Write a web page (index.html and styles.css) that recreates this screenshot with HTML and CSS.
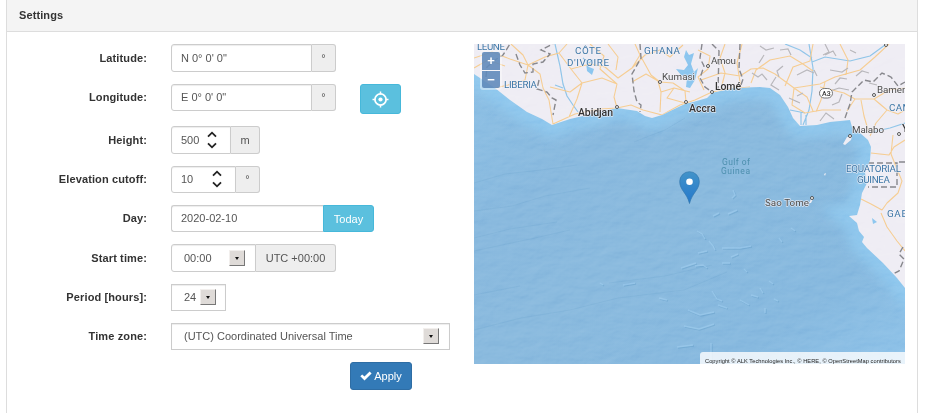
FILE: index.html
```html
<!DOCTYPE html>
<html lang="en">
<head>
<meta charset="utf-8">
<title>Settings</title>
<link rel="stylesheet" href="styles.css">
</head>
<body>
<section class="panel">
  <header class="panel-heading">Settings</header>
  <div class="panel-body">
    <form class="settings">
      <div class="row">
        <label>Latitude:</label>
        <div class="group wide"><span class="field">N 0° 0' 0"</span><span class="addon deg">°</span></div>
      </div>
      <div class="row">
        <label class="raised">Longitude:</label>
        <div class="group wide short"><span class="field">E 0° 0' 0"</span><span class="addon deg">°</span></div>
        <span class="btn btn-info locate">
          <svg width="17" height="17" viewBox="0 0 17 17"><circle cx="8.5" cy="8.5" r="5.6" fill="none" stroke="#fff" stroke-width="1.7"/><circle cx="8.5" cy="8.5" r="2.1" fill="#fff"/><path d="M8.5 .5V3.5M8.5 13.5V16.5M.5 8.5H3.5M13.5 8.5H16.5" stroke="#fff" stroke-width="1.5"/></svg>
        </span>
      </div>
      <div class="row">
        <label>Height:</label>
        <div class="group narrow"><span class="field">500<svg class="spin" width="10" height="18" viewBox="0 0 10 18"><path d="M1 5.7 5 1.7 9 5.7M1 12.3 5 16.3 9 12.3"/></svg></span><span class="addon meter">m</span></div>
      </div>
      <div class="row">
        <label class="raised">Elevation cutoff:</label>
        <div class="group narrow short"><span class="field">10<svg class="spin" width="10" height="18" viewBox="0 0 10 18"><path d="M1 5.7 5 1.7 9 5.7M1 12.3 5 16.3 9 12.3"/></svg></span><span class="addon deg">°</span></div>
      </div>
      <div class="row">
        <label class="raised">Day:</label>
        <div class="group day short"><span class="field">2020-02-10</span><span class="btn btn-info today">Today</span></div>
      </div>
      <div class="row">
        <label>Start time:</label>
        <div class="group wide"><span class="field select">00:00<i class="arrow"></i></span><span class="addon utc">UTC +00:00</span></div>
      </div>
      <div class="row">
        <label class="raised">Period [hours]:</label>
        <div class="group period short"><span class="field select square">24<i class="arrow"></i></span></div>
      </div>
      <div class="row">
        <label class="raised">Time zone:</label>
        <div class="group zone short"><span class="field select square">(UTC) Coordinated Universal Time<i class="arrow"></i></span></div>
      </div>
      <div class="actions">
        <span class="btn btn-primary"><svg width="12" height="10" viewBox="0 0 12 10"><path d="M.3 5.3 2.2 3.4 4.5 5.6 9.6.4 11.6 2.4 4.5 9.6Z" fill="#fff"/></svg>Apply</span>
      </div>
    </form>
    <div class="map">
      <svg class="tiles" width="431" height="320" viewBox="474 44 431 320">
        <defs>
          <linearGradient id="sea" x1="0" y1="0" x2="1" y2="1">
            <stop offset="0" stop-color="#8dc1e6"/><stop offset=".3" stop-color="#89b9de"/><stop offset=".5" stop-color="#8abade"/><stop offset=".8" stop-color="#87b9df"/><stop offset="1" stop-color="#8fc3e9"/>
          </linearGradient>
          <linearGradient id="pin" x1="0" y1="0" x2="0" y2="1"><stop offset="0" stop-color="#4293c9"/><stop offset="1" stop-color="#2478cc"/></linearGradient>
          <path id="land" d="M474 44V74L480 78 495 88 510 100 527 112 542 119 552 125 570 119 583 116 617 108 637 111 645 116 652 118 662 115 668 112 685 104 693 102 707 98 712 93 733 88 760 87 770 88 780 95 788 107 793 118 800 126 817 125 830 122 850 120 852 127 860 133 868 140 871 147 870 160 865 173 867 183 862 193 860 205 857 215 849 216 857 223 859 231 864 237 862 242 867 248 883 263 897 278 905 288V44Z"/>
          <clipPath id="shore"><use href="#land"/></clipPath>
          <filter id="soft" x="-20%" y="-20%" width="140%" height="140%"><feGaussianBlur stdDeviation="6"/></filter>
          <filter id="relief" x="0" y="0" width="100%" height="100%" color-interpolation-filters="sRGB">
            <feTurbulence type="fractalNoise" baseFrequency=".05 .09" numOctaves="4" seed="8"/>
            <feDiffuseLighting surfaceScale="1" lighting-color="#fff"><feDistantLight azimuth="235" elevation="32"/></feDiffuseLighting>
          </filter>
        </defs>
        <rect x="474" y="44" width="431" height="320" fill="url(#sea)"/>
        <use href="#land" fill="none" stroke="#91cbf1" stroke-width="24" filter="url(#soft)" opacity=".8"/>
        <g class="ridges">
          <path d="M474 183 505 174 541 170 577 165M474 211 512 206 545 196 590 188M474 238 510 229 557 222M474 251 535 238 570 230M474 330 521 318 570 310 618 298 684 290 727 272M474 295 520 286M609 283 665 276 712 265M634 142 649 136 665 130 685 118"/>
        </g>
        <g class="mounts">
          <path d="M697 231l5 3 3 5M713 216l6-3M728 214l9-4M698 253l9-2M709 241l4 5 2 4M722 248h18M733 190l2 5-3 3M779 238l3 4M791 228l4 3M744 269l3 3M769 281l4 3M712 291l5 8 5 2M751 295l7 2M760 288l3 5M774 299l4 2M681 268l15-5M684 326l15 3 15-5M688 310l12 5 14-3M677 347l16-2M711 343v20M740 248l11-2M695 266l8-1 4 3M722 263h8M731 257l7-3M600 283l3 2M623 285l12-2M740 300l9 5M765 308v5M659 298l8 2M718 305l9 3"/>
        </g>
        <use href="#land" fill="#efedf4"/>
        <g clip-path="url(#shore)">
          <g class="water">
            <path d="M555 44 560 66 563 84 567 96 573 105 578 112M555 85l8 3M583 58l6 5 4-3M809 44 813 68 812 91 809 110 803 125M812 62 825 57 850 61 870 56 885 45M790 110l15 3M872 132 890 128 905 123M785 44l15 6 12 8M801 112v13M806 115v10"/>
            <path class="lake" d="M586 61l3 6 5 2-2 6-5-4ZM686 50l3 5 5-2-3 11 3 8 4-4-3 12-5 8-4-1 1-9-6-3-5-6 8 1 4-5-4-8ZM872 218l5 4-4 2Z"/>
          </g>
          <g class="roads">
            <path d="M474 58 492 52 510 59 528 65 525 80 508 85 495 88M511 44 523 55 528 65 540 74 543 88 549 100 553 124 575 114 600 109 617 108M528 65 545 57 559 53 567 44M559 53 571 69 582 83 577 99 569 117M582 83 602 78 617 84 614 97 617 108M571 69 590 64 605 67 618 78M590 44 604 56 600 69 617 84M582 83 570 92 550 87M608 44l10 13-2 13M618 78 632 68 640 55 635 44M617 108l14-3 12 5 19 5 18-10 15-5 17-8 15-3 23-2M632 82 646 74 658 81 661 92 660 112M632 68 645 55 660 50 670 57 683 45M660 82 673 83 685 91 686 102M640 55l11 20 9 7M661 92 674 88 690 92M674 88 667 98 685 103M698 50 710 56 708 69 698 77 704 90M725 44l-5 14 5 15-4 16M742 44l-5 19 4 25M701 80 721 73 740 76 751 69 763 68 775 74 794 88 820 84 835 77 860 70 875 57 889 44M751 83 756 70 770 60 790 56 803 64 813 71M794 88 792 105 805 113 822 110 841 110M794 88 807 97 813 111M825 82 821 100 816 112M820 87 844 93 855 99 847 111M813 44l-3 17-17 6-8 19M840 44l8 16-2 15M474 68 488 60 505 66M855 99 874 99 887 110 898 114 905 110M874 99 889 90 905 88M861 100l3 16 5 17M887 110l-11 13-6 13M893 135l-2 19M871 153l18 2 5-8 11-7M891 154l6 15 5 12-4 12-11 10-5 7-11-6-10-5M881 213l6 14 10 14 8 10"/>
          </g>
          <g class="gray">
            <path d="M752 73l6 4 4-3 5 6M780 50l8-1 3 6M776 77l-5 8 8 5M797 75l10-5 7 3M825 55l8-4 3 5M827 92l12-4 10 2M830 70l12 2 6-4M800 103l-11-5M820 121l6-8 8 6M842 94l-3 8-7 3M856 76l6-5 7 2M764 55l-5 8M825 44l4 8-6 3M869 83l8 2M760 46l6 4 8-2M783 66l-6 5 2 6M817 76l-3-6M835 84l5-6 7 1M850 50l6 3M797 96l6-3"/>
          </g>
          <g class="borders">
            <path d="M486 77 487 67 495 60 503 55 510 44M516 54 520 65 525 73 533 72 533 64 543 62 550 54 541 50 553 44M539 80l-2 9 10 3 5 6 4 2-3 15M640 44l1 14-9 16 2 17 3 11 4 3-1 7M702 44l-2 14 4 8-4 12 5 9 7 5M712 44l7 7-1 39M740 44l-1 25 4 10-3 9M845 118l5-14 2-12 12-12 9 2 9-9 9 4 7 9 7-4M868 163h29v24h-29M899 162h6M903 247l-4 7 5 5-5 12-6 3"/>
          </g>
        </g>
        <rect class="texture" x="474" y="44" width="431" height="320" filter="url(#relief)"/>
        <path d="M847 137l5-1-1 4-6 5-2-1ZM809 203l3-6 1 2-2 4ZM824 174l2-1-1 3Z" fill="#efedf4"/>
        <g class="towns"><circle cx="617" cy="107" r="1.5"/><circle cx="660" cy="82" r="1.5"/><circle cx="686" cy="102" r="1.5"/><circle cx="708" cy="66" r="1.5"/><circle cx="712" cy="92" r="1.5"/><circle cx="874" cy="95" r="1.5"/><circle cx="899" cy="134" r="1.5"/><circle cx="850" cy="136" r="1.5"/><circle cx="812" cy="198" r="1.5"/><circle cx="886" cy="45" r="1.5"/></g>
        <g class="country">
          <text x="477" y="50" textLength="28">LEUNE</text>
          <text x="504" y="88" textLength="33">LIBERIA</text>
          <text x="575" y="54" textLength="26">CÔTE</text><text x="567" y="66" textLength="42">D'IVOIRE</text>
          <text x="644" y="54" textLength="36">GHANA</text>
          <text x="889" y="111" textLength="28">CAME</text>
          <text x="846" y="172" textLength="55">EQUATORIAL</text><text x="857" y="183" textLength="33">GUINEA</text>
          <text x="887" y="217" textLength="28">GABO</text>
        </g>
        <g class="city">
          <text class="big" x="578" y="116" textLength="35">Abidjan</text>
          <text x="662" y="80" textLength="33">Kumasi</text>
          <text class="big" x="689" y="112" textLength="27">Accra</text>
          <text class="big" x="715" y="90" textLength="26">Lomé</text>
          <text x="711" y="64" textLength="25">Amou</text>
          <text x="877" y="93" textLength="41">Bamenda</text>
          <text x="852" y="133" textLength="32">Malabo</text>
          <text class="big" x="902" y="132">Yaoundé</text>
          <text x="765" y="206" textLength="44">Sao Tome</text>
        </g>
        <g class="gulf"><text x="722" y="165" textLength="28">Gulf of</text><text x="721" y="174" textLength="29">Guinea</text></g>
        <rect x="819.5" y="88.500" width="13" height="9.500" rx="4.700" fill="#fff" stroke="#777"/><text class="shield" x="822" y="96">A3</text>
        <path d="M689.500 203.500C687 193 679.700 190 679.700 181.500A9.800 9.800 0 0 1 699.300 181.500C699.300 190 692 193 689.500 203.500Z" fill="url(#pin)" stroke="#3277ad" stroke-width=".7"/>
        <circle cx="689.500" cy="181.700" r="3.300" fill="#fff"/>
      </svg>
      <div class="zoom"><span>+</span><span>−</span></div>
      <div class="credits">Copyright © ALK Technologies Inc., © HERE, © OpenStreetMap contributors</div>
    </div>
  </div>
</section>
</body>
</html>
```
FILE: styles.css
```css
* { box-sizing: border-box; }
body {
  margin: 0;
  height: 413px;
  overflow: hidden;
  background: #fff;
  color: #333;
  font: 11px/16px "Liberation Sans", Arial, sans-serif;
}
.panel {
  width: 912px;
  height: 430px;
  margin-left: 6px;
  border: 1px solid #ddd;
  border-top: 0;
}
.panel-heading {
  height: 32px;
  padding: 7px 12px;
  background: #f4f4f4;
  border-bottom: 1px solid #ddd;
  font-weight: bold;
  letter-spacing: .1px;
}
.panel-body {
  display: flex;
  gap: 24px;
  padding: 12px 12px 0;
}
.settings {
  display: grid;
  grid-template-rows: 40px 42px 40px 39px 39px 40px 39px 39px 28px;
  width: 431px;
}
.row {
  display: flex;
  align-items: flex-start;
}
label {
  flex: none;
  width: 128px;
  margin-right: 24px;
  padding-top: 6px;
  text-align: right;
  font-weight: bold;
  letter-spacing: .12px;
}
label.raised { padding-top: 5px; }
.group {
  display: flex;
  height: 28px;
}
.group.short { height: 27px; }
.wide { width: 165px; }
.narrow { width: 89px; }
.day { width: 203px; }
.period { width: 55px; }
.zone { width: 279px; }
.field {
  display: flex;
  flex: 1;
  align-items: center;
  justify-content: space-between;
  padding: 0 13px 0 9px;
  border: 1px solid #ccc;
  border-radius: 3px 0 0 3px;
  box-shadow: inset 0 1px 1px rgba(0, 0, 0, .075);
  color: #555;
  white-space: nowrap;
}
.short .field, .short .addon { padding-bottom: 1px; }
.field.square { border-radius: 0; }
.select { padding: 0 10px 0 12px; }
.period .select { padding-right: 9px; }
.addon {
  flex: none;
  display: flex;
  align-items: center;
  justify-content: center;
  width: 24px;
  border: 1px solid #ccc;
  border-left: 0;
  border-radius: 0 3px 3px 0;
  background: #eee;
  color: #555;
}
.meter { width: 29px; }
.utc { width: 80px; }
.spin {
  fill: none;
  stroke: #222;
  stroke-width: 1.8;
}
.arrow {
  display: flex;
  align-items: center;
  justify-content: center;
  width: 16px;
  height: 16px;
  border: 1px solid;
  border-color: #f2efed #777 #777 #f2efed;
  background: #dfdbd8;
}
.arrow::after {
  content: "";
  border: 2.5px solid transparent;
  border-top: 3px solid #111;
  border-bottom: 0;
}
.btn {
  display: flex;
  align-items: center;
  justify-content: center;
  border: 1px solid #46b8da;
  border-radius: 3px;
  color: #fff;
}
.btn-info { background: #5bc0de; }
.locate {
  width: 41px;
  height: 30px;
  margin-left: 24px;
}
.today {
  width: 51px;
  border-radius: 0 3px 3px 0;
}
.day .field { border-right: 0; }
.actions { padding-left: 331px; }
.btn-primary {
  width: 62px;
  height: 28px;
  gap: 2px;
  border-color: #2e6da4;
  background: #337ab7;
}
.map {
  position: relative;
  width: 431px;
  height: 320px;
  overflow: hidden;
}
.tiles { display: block; font-family: Roboto, sans-serif; }
.texture { mix-blend-mode: soft-light; opacity: .28; }
.ridges path { fill: none; stroke: #74a9d2; stroke-width: 1; opacity: .35; }
.mounts path { fill: none; stroke: #9fcdef; stroke-width: 1.4; opacity: .6; filter: drop-shadow(1px 1px 0 #6ca4cd); }
.water path { fill: none; stroke: #8fc5e9; stroke-width: 1.2; }
.water .lake { fill: #8cc6ef; stroke: none; }
.roads path { fill: none; stroke: #f6cd92; stroke-width: 1.1; stroke-linejoin: round; }
.gray path { fill: none; stroke: #b8b7bb; stroke-width: 1.2; }
.borders path { fill: none; stroke: #87878c; stroke-width: 1.4; stroke-dasharray: 6 3; }
.towns circle { fill: #fff; stroke: #444; stroke-width: .9; }
.country, .city {
  font-size: 9.8px;
  paint-order: stroke;
  stroke: rgba(242, 241, 246, .8);
  stroke-width: 1.4px;
  stroke-linejoin: round;
}
.country { fill: #3c76a6; }
.city { fill: #4c4c4c; }
.city .big { font-size: 10.5px; font-weight: 500; fill: #333; }
.gulf { font-size: 8.5px; fill: #4d8fae; }
.shield { font-size: 7px; font-weight: 500; fill: #333; }
.zoom {
  position: absolute;
  top: 6px;
  left: 6px;
  display: grid;
  gap: 1px;
  padding: 2px;
  border-radius: 3px;
  background: rgba(255, 255, 255, .4);
}
.zoom span {
  width: 18px;
  height: 18px;
  background: rgba(83, 128, 180, .82);
  color: #fff;
  font-size: 13px;
  font-weight: bold;
  line-height: 18px;
  text-align: center;
}
.zoom span:last-child { height: 17px; }
.zoom span:first-child { border-radius: 2px 2px 0 0; }
.zoom span:last-child { border-radius: 0 0 2px 2px; }
.credits {
  position: absolute;
  right: 0;
  bottom: 0;
  width: 205px;
  height: 12px;
  padding-left: 5px;
  border-radius: 3px 0 0;
  background: rgba(255, 255, 255, .8);
  color: #222;
  font-size: 5.7px;
  letter-spacing: .045px;
  line-height: 18px;
  white-space: nowrap;
}
```
